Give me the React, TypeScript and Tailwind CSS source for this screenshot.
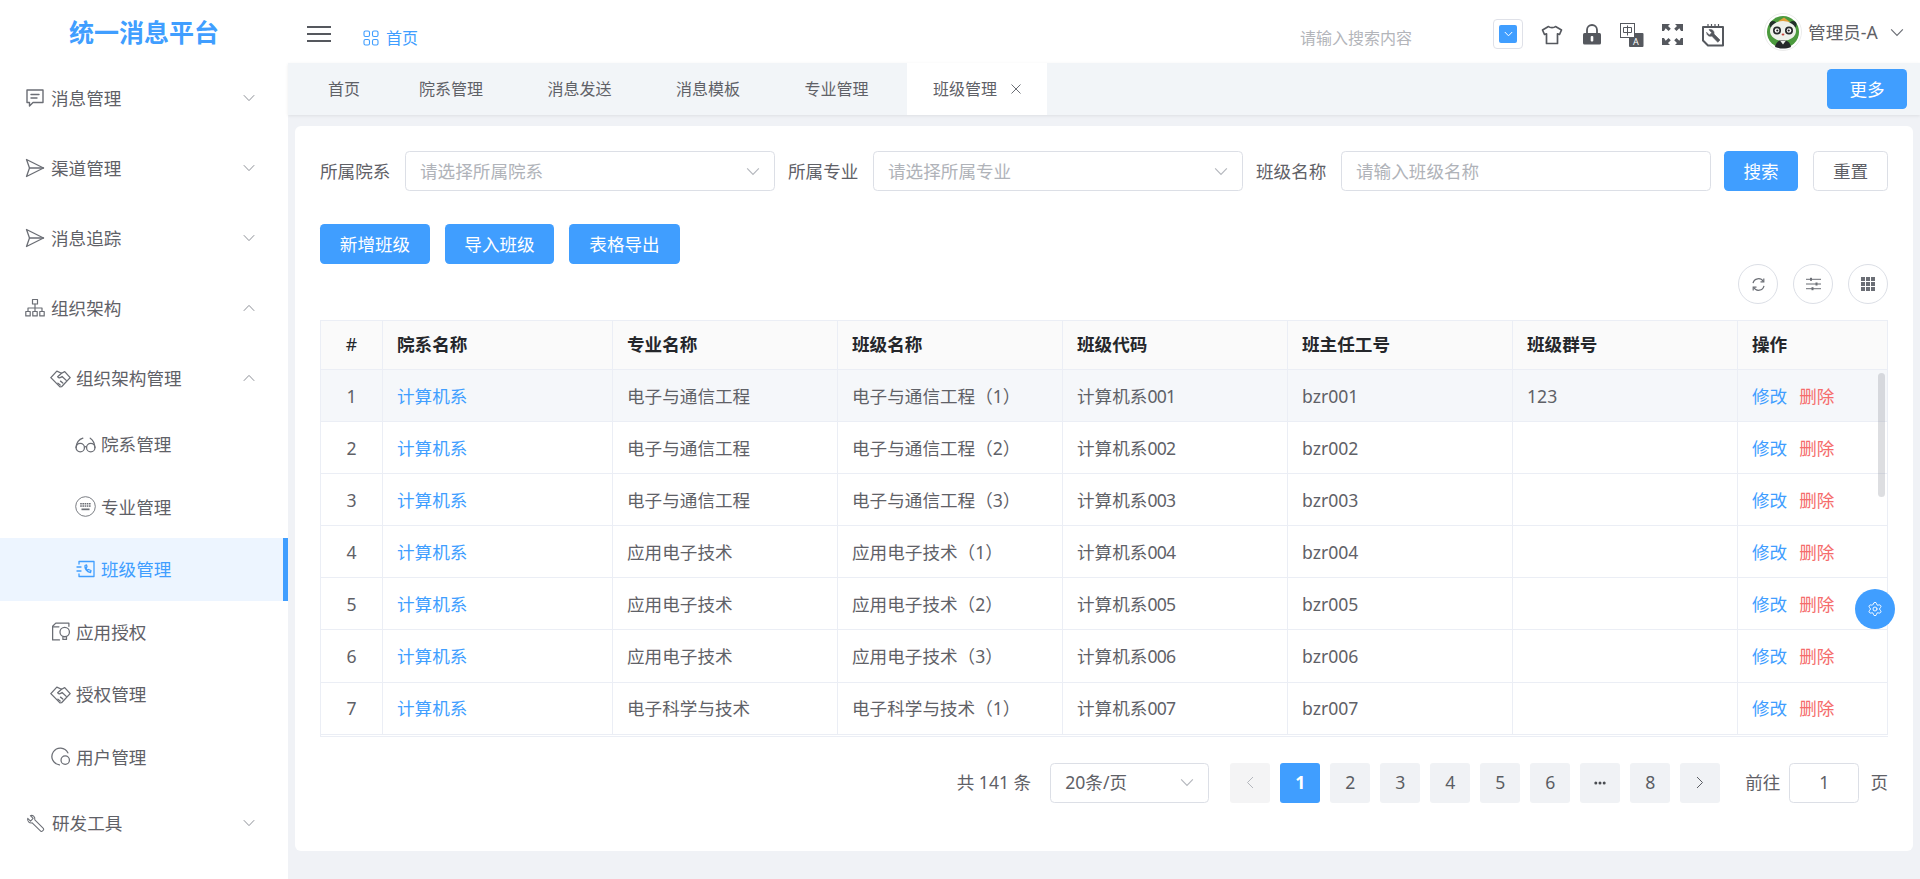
import React from "react";
import { Settings } from "lucide-react";

const G = ({ children, size = 20, className = "", sw = 1.4 }: { children: React.ReactNode; size?: number; className?: string; sw?: number }) => (
  <svg width={size} height={size} viewBox="0 0 20 20" fill="none" stroke="currentColor" strokeWidth={sw} strokeLinecap="round" strokeLinejoin="round" className={"shrink-0 " + className}>
    {children}
  </svg>
);

const Chev = ({ up = false, className = "" }: { up?: boolean; className?: string }) => (
  <svg width="12" height="8" viewBox="0 0 12 8" fill="none" stroke="currentColor" strokeWidth="1" className={"shrink-0 " + className}>
    <path d={up ? "M.8 6.8 6 1.4l5.2 5.4" : "M.8 1.2 6 6.6l5.2-5.4"} />
  </svg>
);

const IcMsg = () => (
  <G size={20} className="-mx-px"><path d="M2 2h16v12.500H8L4.500 18v-3.500H2z" /><path d="M6 6.500h8M6 10h6" /></G>
);
const IcSend = () => (
  <G size={20} className="-mx-px" sw={1.300}><path d="M1.500 1.500 18.500 10 1.500 18.500 4.500 10z" /><path d="M4.500 10h14" /></G>
);
const IcOrg = () => (
  <G size={20} className="-mx-px" sw={1.200}><rect x="7.500" y="1.500" width="5" height="4.500" /><rect x=".8" y="13.500" width="4.400" height="4.400" /><rect x="7.800" y="13.500" width="4.400" height="4.400" /><rect x="14.800" y="13.500" width="4.400" height="4.400" /><path d="M10 6v7.500M3 13.500V10h14v3.500" /></G>
);
const IcHands = () => (
  <G size={21} sw={1.250}>
    <path d="M6.500 3 .8 9.200 9.500 18l1.500-.2 8.200-8.600L14 3.500l-3 1.500z" />
    <path d="M11 5 7.300 8.300c.7 1.200 2 1.300 3 .5l1.200-.7 4 3.700" />
    <path d="M7.500 14.500l2.200 1.800M10 12.500l2.200 1.800" />
  </G>
);
const IcGlasses = () => (
  <G size={21} sw={1.200}><circle cx="5" cy="13" r="4" /><circle cx="15" cy="13" r="4" /><path d="M9 12.500c.6-.5 1.400-.5 2 0M1 13C1.500 8 4 5 7.500 4M19 13c-.3-4-1.500-7-4.500-9" /></G>
);
const IcKeyboard = () => (
  <svg width="21" height="21" viewBox="0 0 21 21" className="shrink-0">
    <circle cx="10.500" cy="10.500" r="9.800" fill="none" stroke="currentColor" strokeWidth=".9" />
    <g fill="currentColor">
      {[5.200, 7.400, 9.600, 11.800, 14].flatMap((x) => [7, 9.300].map((y) => <rect key={x + "-" + y} x={x} y={y} width="1.600" height="1.500" />))}
      <rect x="6.500" y="12.500" width="8" height="1.700" />
    </g>
  </svg>
);
const IcPhoneBox = () => (
  <G size={20} sw={1.300}><path d="M3 5V2.500h15v15H3V15M1 8h4M1 12h4" /><path d="M9 6.500c-.5 3 1.500 6.500 5.500 7l.5-2-2.500-1-1 .7c-.8-.6-1.300-1.500-1.500-2.500l1-.8-.5-2z" /></G>
);
const IcApp = () => (
  <G size={21} sw={1.200}><path d="M9 18H2.500V5l3-3H18v3" /><path d="M2.500 5.500h6" /><circle cx="14" cy="10.500" r="4.500" /><path d="M12.300 15.500v2h3.400v-2" /></G>
);
const IcUser = () => (
  <G size={21} sw={1.200}><path d="M17 6.500A8 8 0 1 0 9 18" /><circle cx="14.500" cy="13.500" r="4" /></G>
);
const IcWrench = () => (
  <G size={19} sw={1.100}><path d="M1.800 4.500 4.800 7.500 7.500 4.700 4.600 1.700C7 .8 9.800 2.800 9.300 6.300L18.500 15.500c.8 1-1.800 3.600-2.800 2.800L6.500 9.300C3.500 9.800 1 7.500 1.800 4.500z" /></G>
);

const Item = ({ icon, label, indent, chev, active, h, textPl }: { icon: React.ReactNode; label: string; indent: string; chev?: "up" | "down"; active?: boolean; h: string; textPl?: string }) => (
  <div className={`flex items-center ${h} ${indent} pr-[33px] relative ${active ? "bg-[#edf5ff] text-[#409eff]" : "text-[#5f6167]"}`}>
    <span className={active ? "text-[#409eff]" : "text-[#6b6e75]"}>{icon}</span>
    <span className={`${textPl ?? "ml-[7px]"} pt-[2px] text-[17.6px] leading-none`}>{label}</span>
    {chev && <Chev up={chev === "up"} className="ml-auto text-[#8d9097]" />}
    {active && <span className="absolute right-0 top-0 bottom-0 w-[5px] bg-[#409eff]" />}
  </div>
);

const Btn = ({ children, className = "" }: { children: React.ReactNode; className?: string }) => (
  <button className={`h-10 rounded-[4.400px] bg-[#409eff] text-white text-[17.6px] leading-none pt-[2px] ${className}`}>{children}</button>
);

const Field = ({ label, ph, select, w, labelW }: { label: string; ph: string; select?: boolean; w: string; labelW: string }) => (
  <div className="flex items-center">
    <span className={`${labelW} pt-[2px] text-[17.6px] leading-none text-[#5f6167]`}>{label}</span>
    <div className={`${w} h-10 rounded-[4.400px] border border-[#dcdfe6] bg-white flex items-center pl-[14px] pr-[14px] text-[17.6px] text-[#b0b3b9]`}>
      <span className="leading-none pt-[2px]">{ph}</span>
      {select && <Chev className="ml-auto w-[14px] h-[9px] text-[#b4b7bd]" />}
    </div>
  </div>
);

const cols = "grid grid-cols-[62px_230px_225px_225px_225px_225px_225px_150px]";

const rows = [
  ["电子与通信工程", "电子与通信工程（1）", "001", "123"],
  ["电子与通信工程", "电子与通信工程（2）", "002", ""],
  ["电子与通信工程", "电子与通信工程（3）", "003", ""],
  ["应用电子技术", "应用电子技术（1）", "004", ""],
  ["应用电子技术", "应用电子技术（2）", "005", ""],
  ["应用电子技术", "应用电子技术（3）", "006", ""],
  ["电子科学与技术", "电子科学与技术（1）", "007", ""],
];

const Th = ({ children, center }: { children: React.ReactNode; center?: boolean }) => (
  <div className={`flex items-center border-r border-b border-[#ebeef5] ${center ? "justify-center font-normal" : "pl-[14px] font-bold"} text-[17.6px] leading-none text-[#25272b]`}>{children}</div>
);
const Td = ({ children, center, className = "" }: { children?: React.ReactNode; center?: boolean; className?: string }) => (
  <div className={`flex items-center border-r border-b border-[#ebeef5] ${center ? "justify-center" : "pl-[14px]"} pt-[2px] text-[17.6px] leading-none text-[#5f6167] ${className}`}>{children}</div>
);

const Page = ({ children, active, disabled }: { children: React.ReactNode; active?: boolean; disabled?: boolean }) => (
  <div className={`w-10 h-10 rounded-[3px] flex items-center justify-center text-[17.6px] ${active ? "bg-[#409eff] text-white font-bold" : disabled ? "bg-[#f4f4f5] text-[#b4b7bd]" : "bg-[#f0f2f5] text-[#5a5d63]"}`}>{children}</div>
);

const Panda = () => (
  <svg width="38" height="38" viewBox="0 0 38 38" className="shrink-0">
    <circle cx="19" cy="19" r="18.500" fill="#fff" stroke="#ececec" />
    <circle cx="19" cy="19" r="16" fill="#4b9a3d" />
    <path d="M14 8.500l6-4 6 4.500-6 1.500z" fill="#e2a03c" />
    <circle cx="9" cy="11.500" r="3.500" fill="#22302a" />
    <circle cx="29" cy="11.500" r="3.500" fill="#22302a" />
    <ellipse cx="19" cy="18" rx="13" ry="10" fill="#eef1ea" />
    <ellipse cx="13" cy="17.500" rx="4" ry="4" fill="#26292a" />
    <ellipse cx="25" cy="17.500" rx="4" ry="4" fill="#26292a" />
    <circle cx="13" cy="17.500" r="2.300" fill="#fff" />
    <circle cx="25" cy="17.500" r="2.300" fill="#fff" />
    <circle cx="13.300" cy="17.500" r="1.100" fill="#222" />
    <circle cx="24.700" cy="17.500" r="1.100" fill="#222" />
    <ellipse cx="19" cy="21.500" rx="1.400" ry="1.100" fill="#c2453d" />
    <path d="M11 34c1-5 4-7 8-7s7 2 8 7c-5 2-11 2-16 0z" fill="#26292a" />
    <path d="M16 27.500h6l-3 4z" fill="#eef0ea" />
  </svg>
);

export default function App() {
  return (
    <div className="flex h-[879px] w-[1920px] overflow-hidden bg-[#f0f2f6] [font-family:'Noto_Sans','Noto_Sans_CJK_SC',sans-serif]">
      {/* sidebar */}
      <aside className="w-[288px] shrink-0 bg-white flex flex-col">
        <div className="h-[63px] flex items-center justify-center pt-[2px] text-[25px] leading-none font-bold text-[#409eff]">统一消息平台</div>
        <Item h="h-[70px]" indent="pl-[26px]" icon={<IcMsg />} label="消息管理" chev="down" />
        <Item h="h-[70px]" indent="pl-[26px]" icon={<IcSend />} label="渠道管理" chev="down" />
        <Item h="h-[70px]" indent="pl-[26px]" icon={<IcSend />} label="消息追踪" chev="down" />
        <Item h="h-[70px]" indent="pl-[26px]" icon={<IcOrg />} label="组织架构" chev="up" />
        <Item h="h-[70px]" indent="pl-[50px]" icon={<IcHands />} label="组织架构管理" chev="up" textPl="ml-[5px]" />
        <Item h="h-[62.500px]" indent="pl-[75px]" icon={<IcGlasses />} label="院系管理" textPl="ml-[5px]" />
        <Item h="h-[62.500px]" indent="pl-[75px]" icon={<IcKeyboard />} label="专业管理" textPl="ml-[5px]" />
        <Item h="h-[62.500px]" indent="pl-[76px]" icon={<IcPhoneBox />} label="班级管理" active textPl="ml-[5px]" />
        <Item h="h-[62.500px]" indent="pl-[50px]" icon={<IcApp />} label="应用授权" textPl="ml-[5px]" />
        <Item h="h-[62.500px]" indent="pl-[50px]" icon={<IcHands />} label="授权管理" textPl="ml-[5px]" />
        <Item h="h-[62.500px]" indent="pl-[50px]" icon={<IcUser />} label="用户管理" textPl="ml-[5px]" />
        <Item h="h-[70px]" indent="pl-[26px]" icon={<IcWrench />} label="研发工具" chev="down" />
      </aside>

      <div className="flex-1 min-w-0 flex flex-col">
        {/* header */}
        <header className="h-[63px] bg-white flex items-center pl-[19px] pr-[14px] shrink-0">
          <div className="w-6 h-[16px] flex flex-col justify-between mt-[5px]">
            <span className="h-[2px] bg-[#55585e]" /><span className="h-[2px] bg-[#55585e]" /><span className="h-[2px] bg-[#55585e]" />
          </div>
          <div className="ml-8 flex items-center text-[#409eff] pt-[12px]">
            <svg width="16" height="16" viewBox="0 0 16 16" fill="none" stroke="currentColor" strokeWidth="1.100">
              <rect x="1" y="1" width="5.500" height="5.500" rx="1.500" /><rect x="9.500" y="1" width="5.500" height="5.500" rx="1.500" /><rect x="1" y="9.500" width="5.500" height="5.500" rx="1.500" /><rect x="9.500" y="9.500" width="5.500" height="5.500" rx="1.500" />
            </svg>
            <span className="ml-[7px] text-[16px] leading-none">首页</span>
          </div>
          <span className="ml-[882px] text-[16px] text-[#b3b5ba] leading-none pt-[12px]">请输入搜索内容</span>
          <div className="ml-[81px] w-[30px] h-[30px] rounded-[4px] border border-[#dfe1e8] flex items-center justify-center mt-[5px]">
            <div className="w-[18px] h-[18px] rounded-[2px] bg-[#409eff] flex items-center justify-center">
              <svg width="9" height="6" viewBox="0 0 9 6" fill="none" stroke="#fff" strokeWidth="1"><path d="M.8 1 4.500 4.800 8.200 1" /></svg>
            </div>
          </div>
          <div className="flex items-center mt-[6px]">
            <svg width="22" height="20" viewBox="0 0 22 20" fill="none" stroke="#55585e" strokeWidth="1.700" strokeLinejoin="round" className="ml-[18px]">
              <path d="M7.500 1.500C9 3 13 3 14.500 1.500L20.500 5 18.500 9.500 16.500 8.800V18.500H5.500V8.800L3.500 9.500 1.500 5z" />
            </svg>
            <svg width="20" height="21" viewBox="0 0 20 21" className="ml-[19px]">
              <path d="M5 9V6a5 5 0 0 1 10 0v3" fill="none" stroke="#55585e" strokeWidth="1.800" />
              <rect x="1" y="9" width="18" height="11.500" rx="1.500" fill="#55585e" />
              <rect x="8.700" y="12" width="2.600" height="5.500" rx="1" fill="#fff" />
            </svg>
            <svg width="24" height="24" viewBox="0 0 24 24" className="ml-[18px]">
              <rect x="9" y="10" width="14.500" height="14" rx="1" fill="#55585e" />
              <rect x=".5" y=".5" width="14" height="14" fill="#fff" stroke="#55585e" />
              <path d="M3.500 4.500h8v5h-8zM7.500 2.500v10" fill="none" stroke="#55585e" strokeWidth="1" />
              <text x="13" y="21.500" fontSize="9" fill="#fff">A</text>
            </svg>
            <svg width="21" height="21" viewBox="0 0 21 21" className="ml-[18px]" fill="#55585e">
              <path d="M0 0h8L6 2l2.800 2.800-2.300 2.300L3.700 4.300 2 7H0zM21 0v7h-2l-1.700-2.700-2.800 2.800-2.300-2.300L15 2l-2-2zM0 21v-7h2l1.700 2.700 2.800-2.800 2.300 2.300L6 19l2 2zM21 21h-8l2-2-2.800-2.800 2.300-2.300 2.800 2.800L19 14h2z" />
            </svg>
            <svg width="24" height="24" viewBox="0 0 24 24" fill="none" stroke="#55585e" className="ml-[18px]">
              <path d="M2 4h20v18.500H7L2 17.500z" strokeWidth="2" strokeLinejoin="round" />
              <path d="M7 1v4M10.500 1v4M14 1v4M17.500 1v4" strokeWidth="1.200" />
              <path d="M5.500 9.500 8.500 12l2.200-2.300-2.700-3c3-.8 5.500 1 5 4.300l6 6-2.200 2.300-6-6.200c-3 .8-5.500-1.300-4.800-3.600z" fill="#55585e" strokeWidth=".6" />
            </svg>
          </div>
          <div className="ml-[39px] flex items-center mt-px">
            <Panda />
            <span className="ml-[6px] pt-[2px] text-[17.6px] leading-none text-[#5f6167]">管理员-A</span>
            <Chev className="ml-[12px] w-[14px] h-[9px] text-[#6b6e75]" />
          </div>
        </header>

        {/* tabs */}
        <div className="h-[52px] shrink-0 bg-[#f2f5f8] flex items-center shadow-[0_1px_3px_rgba(0,0,0,0.08)] relative pr-[13px]">
          <div className="flex items-stretch h-full pl-[14px] text-[16px] text-[#5f6167] leading-none">
            <div className="px-[26px] mr-[7px] flex items-center">首页</div>
            {["院系管理", "消息发送", "消息模板", "专业管理"].map((t) => (
              <div key={t} className="px-[26px] mr-[12.500px] flex items-center">{t}</div>
            ))}
            <div className="w-[140px] pl-[26px] bg-white flex items-center">
              班级管理
              <svg width="12" height="12" viewBox="0 0 12 12" stroke="#6b6e75" strokeWidth="1" className="ml-[13px]"><path d="M1.500 1.500l9 9M10.500 1.500l-9 9" /></svg>
            </div>
          </div>
          <Btn className="ml-auto w-20">更多</Btn>
        </div>

        {/* card */}
        <main className="mx-[7px] mt-[11px] h-[725px] rounded-[6px] bg-white px-[25px] pt-[25px] relative">
          <div className="flex items-center">
            <Field label="所属院系" ph="请选择所属院系" select w="w-[370px]" labelW="w-[85px]" />
            <div className="w-[13px]" />
            <Field label="所属专业" ph="请选择所属专业" select w="w-[370px]" labelW="w-[85px]" />
            <div className="w-[13px]" />
            <Field label="班级名称" ph="请输入班级名称" w="w-[370px]" labelW="w-[85px]" />
            <Btn className="ml-[13px] w-[74px]">搜索</Btn>
            <button className="ml-[15px] w-[75px] h-10 rounded-[4.400px] border border-[#dcdfe6] text-[17.6px] leading-none pt-[2px] text-[#5f6167]">重置</button>
          </div>
          <div className="flex gap-[15px] mt-[33px]">
            <Btn className="w-[110px]">新增班级</Btn>
            <Btn className="w-[109px]">导入班级</Btn>
            <Btn className="w-[111px]">表格导出</Btn>
          </div>
          <div className="flex justify-end gap-[15px] h-10">
            <div className="w-10 h-10 rounded-full border border-[#dcdfe6] flex items-center justify-center text-[#6b6e75]">
              <svg width="15" height="15" viewBox="0 0 15 15" fill="none" stroke="currentColor" strokeWidth="1.200"><path d="M2 6.200A5.600 5.600 0 0 1 12.300 4.500M13 8.800A5.600 5.600 0 0 1 2.700 10.500" /><path d="M12.800 1.500v3.300H9.500M2.200 13.500v-3.300h3.300" /></svg>
            </div>
            <div className="w-10 h-10 rounded-full border border-[#dcdfe6] flex items-center justify-center text-[#6b6e75]">
              <svg width="15" height="14" viewBox="0 0 15 14" fill="currentColor"><rect y="1.800" width="15" height="1" /><rect y="6.500" width="15" height="1" /><rect y="11.200" width="15" height="1" /><rect x="4" y=".8" width="2" height="3" /><rect x="9.500" y="5.500" width="2" height="3" /><rect x="5.500" y="10.200" width="2" height="3" /></svg>
            </div>
            <div className="w-10 h-10 rounded-full border border-[#dcdfe6] flex items-center justify-center">
              <div className="grid grid-cols-3 gap-[1px] w-[14px]">
                {Array.from({ length: 9 }).map((_, i) => <span key={i} className="h-[4px] bg-[#6b6e75]" />)}
              </div>
            </div>
          </div>

          {/* table */}
          <div className="mt-4 w-[1568px] border-t border-l border-[#ebeef5] relative overflow-hidden">
            <div className={`${cols} h-[49px] bg-[#fafafa]`}>
              <Th center>#</Th>
              {["院系名称", "专业名称", "班级名称", "班级代码", "班主任工号", "班级群号", "操作"].map((h) => <Th key={h}>{h}</Th>)}
            </div>
            {rows.map((r, i) => (
              <div key={i} className={`${cols} h-[52.100px] ${i === 0 ? "bg-[#f5f7fa]" : "bg-white"}`}>
                <Td center>{i + 1}</Td>
                <Td className="text-[#409eff]">计算机系</Td>
                <Td>{r[0]}</Td>
                <Td>{r[1]}</Td>
                <Td>计算机系<span className="tracking-[-0.8px]">{r[2]}</span></Td>
                <Td>bzr{r[2]}</Td>
                <Td>{r[3]}</Td>
                <Td>
                  <span className="text-[#409eff]">修改</span>
                  <span className="ml-[12px] text-[#f56c6c]">删除</span>
                </Td>
              </div>
            ))}
            <div className="h-[2px] border-b border-[#ebeef5]" />
            <div className="absolute right-[3px] top-[52px] w-[7px] h-[124px] rounded-[4px] bg-[#90939a]/30" />
          </div>

          {/* pagination */}
          <div className="mt-[26px] flex items-center justify-end text-[#5f6167]">
            <span className="text-[17.6px] leading-none mr-[19px]">共 141 条</span>
            <div className="w-[159px] h-10 rounded-[4.400px] border border-[#dcdfe6] flex items-center pl-[14px] pr-[14px] text-[17.6px]">
              <span className="leading-none">20条/页</span>
              <Chev className="ml-auto w-[14px] h-[9px] text-[#b4b7bd]" />
            </div>
            <div className="flex gap-[10px] ml-[21px]">
              <Page disabled><svg width="8" height="13" viewBox="0 0 8 13" fill="none" stroke="currentColor"><path d="M7 1 1.500 6.500 7 12" /></svg></Page>
              <Page active>1</Page>
              {["2", "3", "4", "5", "6"].map((p) => <Page key={p}>{p}</Page>)}
              <Page><svg width="12" height="4" viewBox="0 0 12 4" fill="#4a4d52"><circle cx="1.800" cy="2" r="1.500" /><circle cx="6" cy="2" r="1.500" /><circle cx="10.200" cy="2" r="1.500" /></svg></Page>
              <Page>8</Page>
              <Page><svg width="8" height="13" viewBox="0 0 8 13" fill="none" stroke="currentColor"><path d="M1 1l5.500 5.500L1 12" /></svg></Page>
            </div>
            <span className="ml-[25px] text-[17.6px] leading-none">前往</span>
            <div className="ml-[9px] w-[70px] h-10 rounded-[4.400px] border border-[#dcdfe6] flex items-center justify-center text-[17.6px]">1</div>
            <span className="ml-[11px] text-[17.6px] leading-none">页</span>
          </div>

          {/* floating */}
          <div className="absolute left-[1560px] top-[463px] w-10 h-10 rounded-full bg-[#409eff] flex items-center justify-center text-white">
            <Settings size={16} strokeWidth={1.400} />
          </div>
        </main>
      </div>
    </div>
  );
}
